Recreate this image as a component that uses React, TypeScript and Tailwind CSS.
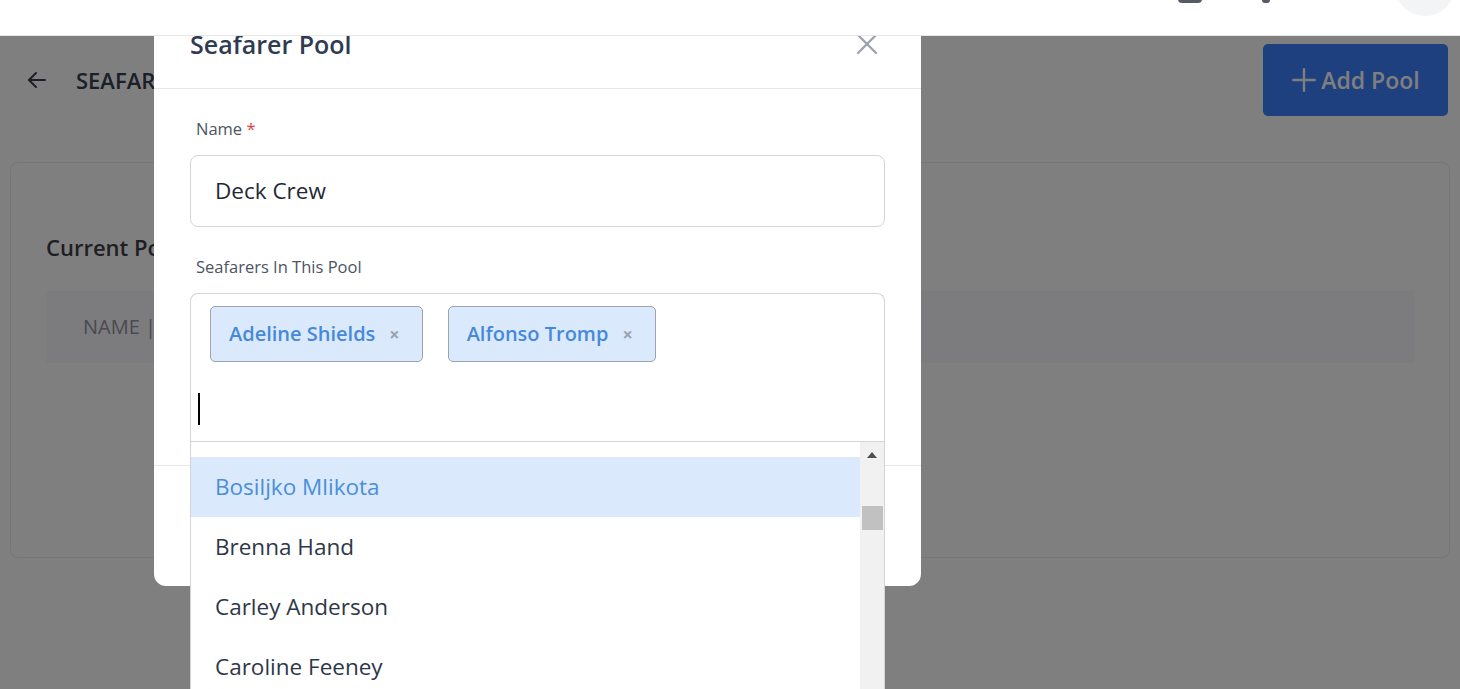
import React from "react";

const font = { fontFamily: '"Open Sans", "Noto Sans", sans-serif' };

function ArrowLeft() {
  return (
    <svg width="24" height="24" viewBox="0 0 24 24" fill="none" stroke="#374151" strokeWidth="2" strokeLinecap="round" strokeLinejoin="round">
      <path d="M20 12H4" />
      <path d="M11 5l-7 7 7 7" />
    </svg>
  );
}

function CloseX() {
  return (
    <svg width="24" height="24" viewBox="0 0 24 24" fill="none" stroke="#9ca3af" strokeWidth="2.4" strokeLinecap="round">
      <path d="M3 3l18 18" />
      <path d="M21 3L3 21" />
    </svg>
  );
}

function Chip({ label }: { label: string }) {
  return (
    <div className="flex h-[56px] items-center rounded-[5px] border border-[#9ca3af] bg-[#dbe9fc] pl-[18px] pr-[22px]">
      <span className="text-[20px] font-semibold text-[#4689da]">{label}</span>
      <span className="ml-[14px] text-[18px] font-bold text-[#9ca3af]">×</span>
    </div>
  );
}

const items = [
  { name: "Audrey Kuhn", active: false },
  { name: "Bosiljko Mlikota", active: true },
  { name: "Brenna Hand", active: false },
  { name: "Carley Anderson", active: false },
  { name: "Caroline Feeney", active: false },
  { name: "Carmen Hills", active: false },
];

export default function App() {
  return (
    <div className="relative h-[689px] w-[1460px] overflow-hidden bg-white" style={font}>
      {/* top header */}
      <div className="relative z-30 h-[36px] border-b border-[#e5e7eb] bg-white">
        <div className="flex h-full items-start justify-end pr-[5px]">
          <div className="-mt-[20px] mr-[60px] h-[23px] w-[24px] rounded-[4px] border-[3px] border-[#555b66]" />
          <div className="-mt-[20px] mr-[125px] h-[23px] w-[8px] rounded-b-[3px] bg-[#555b66]" />
          <div className="-mt-[44px] h-[60px] w-[60px] rounded-full bg-[#f3f4f6]" />
        </div>
      </div>

      {/* main page */}
      <div className="relative h-[653px]">
        <div className="flex h-[79px] items-start justify-between pl-[25px] pr-[12px] pt-[8px]">
          <div className="flex h-[72px] items-center gap-[27px]">
            <ArrowLeft />
            <span className="text-[22px] font-semibold text-[#374151]">SEAFARER POOLS</span>
          </div>
          <button className="flex h-[72px] w-[185px] items-center justify-center gap-[4px] rounded-[5px] bg-[#3c80fc] text-[23px] font-semibold text-white">
            <svg width="26" height="26" viewBox="0 0 24 24" fill="none" stroke="currentColor" strokeWidth="2.2" strokeLinecap="round">
              <path d="M12 2v20M2 12h20" />
            </svg>
            Add Pool
          </button>
        </div>

        <div className="mx-[10px] mt-[47px] h-[396px] rounded-[8px] border border-[#ececec] bg-white px-[35px] pt-[68px]">
          <div className="text-[22px] font-semibold text-[#3f3f46]">Current Pools</div>
          <div className="mt-[27px] flex h-[72px] items-center bg-[#f9f9ff] pl-[37px] text-[20px] text-[#94949e]">
            NAME | SEAFARERS
          </div>
        </div>

        {/* overlay */}
        <div className="absolute inset-0 z-10 bg-black/50" />

        {/* modal */}
        <div className="absolute left-[154px] top-[-36px] z-20 w-[767px] rounded-b-[12px] bg-white">
          <div className="flex h-[89px] items-center justify-between border-b border-[#e5e7eb] pl-[36px] pr-[42px] pt-[2px]">
            <span className="text-[25px] font-semibold text-[#2f3b52]">Seafarer Pool</span>
            <div className="-mt-[2px]">
              <CloseX />
            </div>
          </div>

          <div className="px-[36px] pt-[28px]">
            <div className="pl-[6px] text-[16.5px] leading-[24px] text-[#4b5563]">
              Name <span className="text-[#e53e3e]">*</span>
            </div>
            <div className="mt-[14px] flex h-[72px] items-center rounded-[8px] border border-[#d1d5db] px-[24px] text-[22.5px] text-[#1f2937]">
              Deck Crew
            </div>
            <div className="mt-[28px] pl-[6px] text-[16.5px] leading-[24px] text-[#4b5563]">Seafarers In This Pool</div>

            <div className="relative mt-[14px] h-[149px] rounded-t-[8px] border border-b-0 border-[#d1d5db]">
              <div className="flex gap-[25px] pl-[19px] pt-[12px]">
                <Chip label="Adeline Shields" />
                <Chip label="Alfonso Tromp" />
              </div>
              <div className="ml-[7px] mt-[31px] h-[32px] w-[2px] bg-black" />

              {/* dropdown */}
              <div className="absolute left-[-1px] top-[147px] flex h-[260px] w-[695px] overflow-hidden border border-[#d1d5db] bg-white">
                <div className="flex-1 overflow-hidden">
                  <div className="-mt-[43px]">
                    {items.map((it, i) => (
                      <div
                        key={it.name}
                        className={`flex h-[60px] items-center px-[24px] text-[22.5px] ${
                          it.active ? "bg-[#dbe9fd] text-[#4a8fd9]" : "text-[#2d3748]"
                        } ${i === 1 ? "mt-[-2px]" : ""}`}
                      >
                        {it.name}
                      </div>
                    ))}
                  </div>
                </div>
                <div className="relative w-[24px] bg-[#f1f1f1]">
                  <svg className="absolute left-[6px] top-[9px]" width="12" height="8" viewBox="0 0 12 8">
                    <path d="M6 1L11 7H1z" fill="#505050" />
                  </svg>
                  <div className="absolute left-[2px] top-[64px] h-[24px] w-[21px] bg-[#c1c1c1]" />
                </div>
              </div>
            </div>
          </div>

          <div className="mt-[23px] h-[121px] border-t border-[#e5e7eb]" />
        </div>
      </div>
    </div>
  );
}
